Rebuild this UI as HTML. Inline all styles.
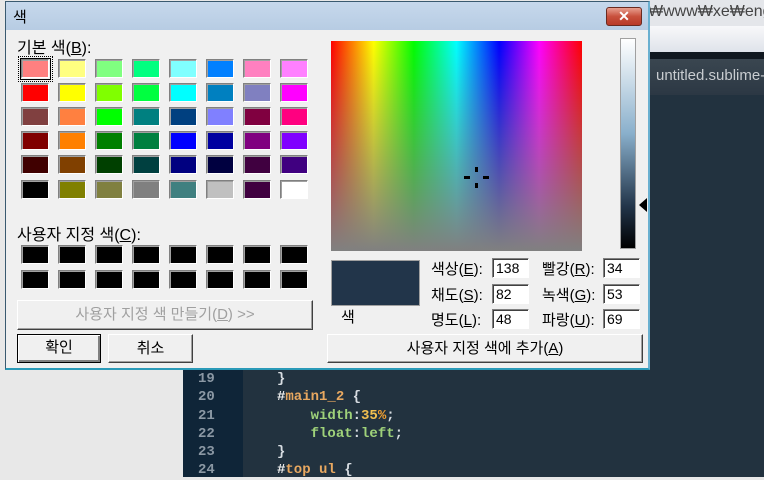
<!DOCTYPE html>
<html><head><meta charset="utf-8"><style>
*{margin:0;padding:0;box-sizing:border-box}
body{width:764px;height:477px;overflow:hidden;position:relative;background:#e8e8e8;font-family:"Liberation Sans","Noto Sans CJK KR",sans-serif;font-size:13px;color:#000}
.a{position:absolute}
.sw{position:absolute;width:28px;height:19px;border:1px solid;border-color:#808080 #fff #fff #808080;box-shadow:inset 1px 1px 0 #a0a0a0}
.btn{position:absolute;background:#f0f0f0;border:1px solid;border-color:#fff #404040 #404040 #fff;box-shadow:inset -1px -1px 0 #a0a0a0;text-align:center;font-size:15px}
.inp{position:absolute;width:37px;height:20px;background:#fff;border:1px solid;border-color:#808080 #fff #fff #808080;box-shadow:inset 1px 1px 0 #404040;font-size:14px;padding-left:3px;line-height:18px}
.lb{position:absolute;font-size:15px}
.code{position:absolute;font-family:"Liberation Mono","DejaVu Sans Mono",monospace;font-size:14px;line-height:18.3px;font-weight:600}
</style></head><body>
<div class="a" style="left:648px;top:0;width:116px;height:26px;background:#e4e6ea"></div>
<div class="a" style="left:648px;top:3px;font-size:16px;color:#444;white-space:nowrap">₩www₩xe₩english</div>
<div class="a" style="left:648px;top:26px;width:116px;height:26px;background:linear-gradient(#f8f8fa,#dfe3ea)"></div>
<div class="a" style="left:648px;top:52px;width:116px;height:7px;background:#101820"></div>
<div class="a" style="left:648px;top:59px;width:116px;height:36px;background:linear-gradient(#3a4650,#2c3844)"></div>
<div class="a" style="left:656px;top:67px;font-size:15px;color:#c8ccd0;white-space:nowrap">untitled.sublime-</div>
<div class="a" style="left:648px;top:95px;width:116px;height:382px;background:#22323f"></div>
<div class="a" style="left:183px;top:368px;width:581px;height:109px;background:#22323f"></div>
<div class="a" style="left:183px;top:368px;width:60px;height:109px;background:#0f2538"></div>
<div class="code" style="left:198px;top:370px;color:#8b98a4">19<br>20<br>21<br>22<br>23<br>24</div>
<div class="code" style="left:277px;top:370px;color:#d8dde2;white-space:pre">}
<span style="color:#f0f0f0">#</span><span style="color:#e8a860">main1_2</span> {
    <span style="color:#9fd27a">width</span>:<span style="color:#f2c050">35</span><span style="color:#f2a030">%</span>;
    <span style="color:#9fd27a">float</span>:<span style="color:#9fd27a">left</span>;
}
<span style="color:#f0f0f0">#</span><span style="color:#e8a860">top ul</span> {</div>
<div class="a" style="left:5px;top:1px;width:645px;height:369px;background:#f0f0f0;border:1px solid #3a5a70;border-bottom:2px solid #2a9ab8;border-right:2px solid #6ab0d0"></div>
<div class="a" style="left:6px;top:2px;width:642px;height:28px;background:linear-gradient(#c6d8ec,#b7cce3)"></div>
<div class="a" style="left:13px;top:6px;font-size:15px">색</div>
<div class="a" style="left:606px;top:7px;width:36px;height:19px;border-radius:3px;background:linear-gradient(#e8a090,#c8503c 50%,#b83a28);border:1px solid #6a2a20;color:#fff;text-align:center;font-weight:bold;font-size:14px;line-height:16px">✕</div>
<div class="lb" style="left:17px;top:34px;font-size:16px">기본 색(<u>B</u>):</div>
<div id="g"></div>
<div class="a" style="left:18px;top:56px;width:35px;height:26px;border:1px dotted #000"></div>
<div class="a" style="left:20px;top:58px;width:31px;height:22px;border:1px solid #000"></div>
<div class="lb" style="left:17px;top:221px;font-size:16px">사용자 지정 색(<u>C</u>):</div>
<div class="btn" style="left:17px;top:300px;width:296px;height:30px;line-height:28px;color:#a0a0a0">사용자 지정 색 만들기(<u>D</u>) &gt;&gt;</div>
<div class="btn" style="left:17px;top:334px;width:84px;height:29px;line-height:26px;border:1px solid #000;box-shadow:inset 1px 1px 0 #fff,inset -2px -2px 0 #808080">확인</div>
<div class="btn" style="left:108px;top:334px;width:85px;height:29px;line-height:27px">취소</div>
<div class="a" style="left:331px;top:41px;width:251px;height:210px;background:linear-gradient(to bottom,rgba(128,128,128,0),#808080),linear-gradient(to right,#f00,#ff0 17%,#0f0 33%,#0ff 50%,#00f 67%,#f0f 83%,#f00)"></div>
<div class="a" style="left:475px;top:167px;width:3px;height:5px;background:#000"></div>
<div class="a" style="left:475px;top:183px;width:3px;height:5px;background:#000"></div>
<div class="a" style="left:464px;top:176px;width:6px;height:3px;background:#000"></div>
<div class="a" style="left:483px;top:176px;width:6px;height:3px;background:#000"></div>
<div class="a" style="left:620px;top:38px;width:16px;height:211px;border:1px solid #a0a0a0;background:linear-gradient(#fff,#8ab0cc 45%,#22354a 80%,#000)"></div>
<div class="a" style="left:639px;top:198px;width:0;height:0;border-top:7px solid transparent;border-bottom:7px solid transparent;border-right:8px solid #000"></div>
<div class="a" style="left:331px;top:260px;width:89px;height:46px;background:#22354a;border:1px solid #a0a0a0"></div>
<div class="lb" style="left:341px;top:306px">색</div>
<div class="lb" style="left:431px;top:258px">색상(<u>E</u>):</div>
<div class="lb" style="left:431px;top:284px">채도(<u>S</u>):</div>
<div class="lb" style="left:431px;top:309px">명도(<u>L</u>):</div>
<div class="inp" style="left:492px;top:258px">138</div>
<div class="inp" style="left:492px;top:284px">82</div>
<div class="inp" style="left:492px;top:309px">48</div>
<div class="lb" style="left:542px;top:258px">빨강(<u>R</u>):</div>
<div class="lb" style="left:542px;top:284px">녹색(<u>G</u>):</div>
<div class="lb" style="left:542px;top:309px">파랑(<u>U</u>):</div>
<div class="inp" style="left:603px;top:258px">34</div>
<div class="inp" style="left:603px;top:284px">53</div>
<div class="inp" style="left:603px;top:309px">69</div>
<div class="btn" style="left:327px;top:334px;width:316px;height:29px;line-height:27px">사용자 지정 색에 추가(<u>A</u>)</div>
<script>
var c=[["#ff8080","#ffff80","#80ff80","#00ff80","#80ffff","#0080ff","#ff80c0","#ff80ff"],
["#ff0000","#ffff00","#80ff00","#00ff40","#00ffff","#0080c0","#8080c0","#ff00ff"],
["#804040","#ff8040","#00ff00","#008080","#004080","#8080ff","#800040","#ff0080"],
["#800000","#ff8000","#008000","#008040","#0000ff","#0000a0","#800080","#8000ff"],
["#400000","#804000","#004000","#004040","#000080","#000040","#400040","#400080"],
["#000000","#808000","#808040","#808080","#408080","#c0c0c0","#400040","#ffffff"]];
var h="",ys=[59,83,107,131,155,180];
for(var r=0;r<6;r++)for(var i=0;i<8;i++)h+='<div class="sw" style="left:'+(21+i*37)+'px;top:'+ys[r]+'px;background:'+c[r][i]+'"></div>';
for(var r=0;r<2;r++)for(var i=0;i<8;i++)h+='<div class="sw" style="left:'+(21+i*37)+'px;top:'+(245+r*25)+'px;background:#000"></div>';
document.getElementById("g").innerHTML=h;
</script>
</body></html>
